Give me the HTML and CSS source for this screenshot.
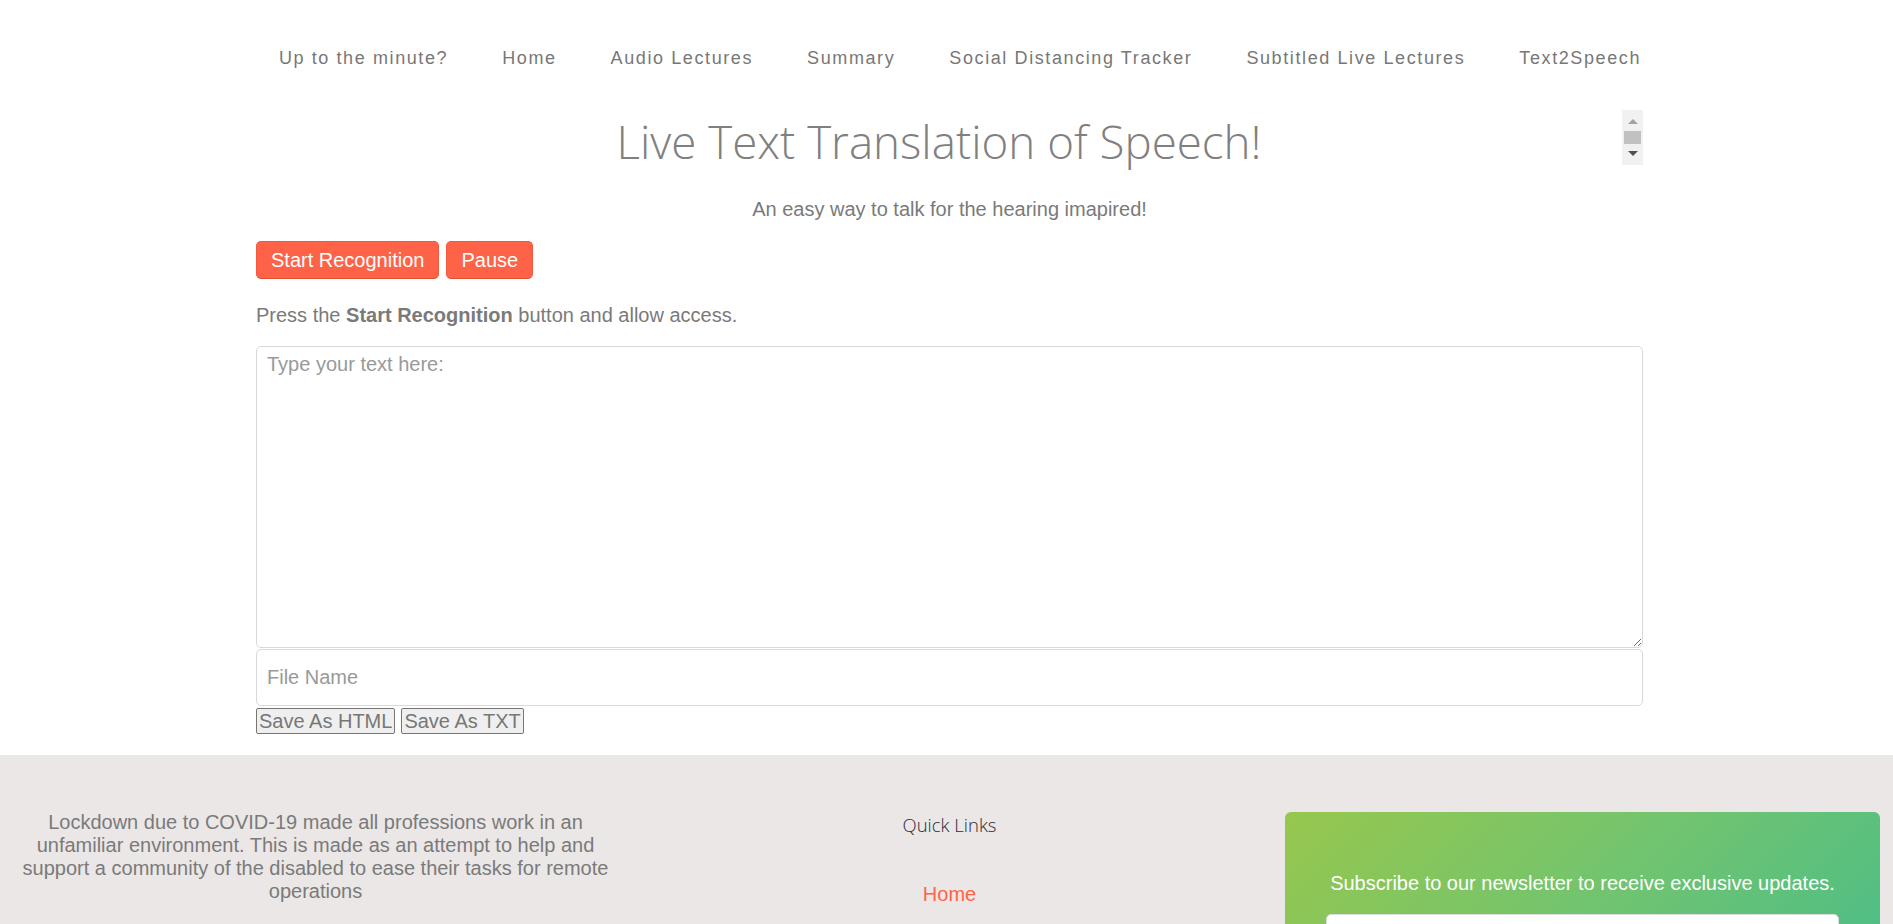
FILE: index.html
```html
<!DOCTYPE html>
<html lang="en">
<head>
<meta charset="utf-8">
<title>Live Text Translation of Speech</title>
<link rel="stylesheet" href="styles.css">
</head>
<body>
<header class="topnav">
  <nav class="nav-links">
    <a href="#">Up to the minute?</a>
    <a href="#">Home</a>
    <a href="#">Audio Lectures</a>
    <a href="#">Summary</a>
    <a href="#">Social Distancing Tracker</a>
    <a href="#">Subtitled Live Lectures</a>
    <a href="#">Text2Speech</a>
  </nav>
</header>
<main class="content">
  <div class="title-box">
    <h1 class="title">Live Text Translation of Speech!</h1>
    <div class="fake-scroll">
      <span class="arrow-up"></span>
      <span class="thumb"></span>
      <span class="arrow-down"></span>
    </div>
  </div>
  <p class="lead">An easy way to talk for the hearing imapired!</p>
  <div class="actions">
    <button class="btn-primary">Start Recognition</button>
    <button class="btn-primary">Pause</button>
  </div>
  <p class="hint">Press the <b>Start Recognition</b> button and allow access.</p>
  <textarea class="text-area" placeholder="Type your text here:"></textarea>
  <input class="file-name" type="text" placeholder="File Name">
  <div class="save-row">
    <button class="btn-save">Save As HTML</button>
    <button class="btn-save">Save As TXT</button>
  </div>
</main>
<footer class="footer">
  <div class="footer-col about">
    <p>Lockdown due to COVID-19 made all professions work in an unfamiliar environment. This is made as an attempt to help and support a community of the disabled to ease their tasks for remote operations</p>
  </div>
  <div class="footer-col links">
    <h4 class="links-title">Quick Links</h4>
    <a class="footer-link" href="#">Home</a>
  </div>
  <div class="footer-col subscribe">
    <div class="newsletter">
      <p class="newsletter-text">Subscribe to our newsletter to receive exclusive updates.</p>
      <input class="newsletter-input" type="email">
    </div>
  </div>
</footer>
</body>
</html>
```

FILE: styles.css
```css
html, body {
  margin: 0;
  padding: 0;
}
body {
  font-family: "Liberation Sans", Arial, sans-serif;
  font-size: 20px;
  color: #7a7a7a;
  background: #fff;
}

.topnav {
  width: 1387px;
  margin-left: calc((100% - 1381px) / 2);
  padding-top: 46px;
}
.nav-links {
  display: flex;
  justify-content: flex-end;
  gap: 54px;
  padding-right: 2px;
}
.nav-links a {
  color: #777;
  text-decoration: none;
  font-size: 18px;
  letter-spacing: 1.6px;
  line-height: 24px;
}

.content {
  width: 1387px;
  margin-left: calc((100% - 1381px) / 2);
}
.title-box {
  display: flex;
  margin-top: 40px;
  height: 55px;
}
.title {
  flex: 1;
  margin: 0;
  padding-top: 4px;
  text-align: center;
  font-family: "Open Sans", sans-serif;
  font-weight: 300;
  font-size: 45.7px;
  line-height: 55px;
  color: #808080;
}
.fake-scroll {
  width: 21px;
  background: #f1f1f1;
  display: flex;
  flex-direction: column;
  align-items: center;
}
.arrow-up {
  margin-top: 9px;
  width: 0;
  height: 0;
  border-left: 5px solid transparent;
  border-right: 5px solid transparent;
  border-bottom: 5px solid #a3a3a3;
}
.thumb {
  margin-top: 7px;
  width: 17px;
  height: 13px;
  background: #c1c1c1;
}
.arrow-down {
  margin-top: 7px;
  width: 0;
  height: 0;
  border-left: 5px solid transparent;
  border-right: 5px solid transparent;
  border-top: 5px solid #505050;
}

.lead {
  margin: 32px 0 0;
  text-align: center;
  line-height: 24px;
}
.actions {
  margin-top: 20px;
  display: flex;
  gap: 7px;
}
.btn-primary {
  font-family: "Liberation Sans", Arial, sans-serif;
  font-size: 20px;
  line-height: 24px;
  color: #fff;
  background: #ff6347;
  border: 1px solid #f05a3e;
  border-bottom-color: #e0502f;
  border-radius: 5px;
  padding: 6px 14px;
}
.hint {
  margin: 24px 0 0;
  line-height: 24px;
}
.text-area {
  display: block;
  box-sizing: border-box;
  width: 100%;
  height: 302px;
  margin-top: 19px;
  padding: 6px 10px;
  border: 1px solid #d9d9d9;
  border-radius: 5px;
  font-family: "Liberation Sans", Arial, sans-serif;
  font-size: 20px;
  color: #555;
}
.text-area::placeholder,
.file-name::placeholder {
  color: #999;
}
.file-name {
  display: block;
  box-sizing: border-box;
  width: 100%;
  height: 57px;
  margin-top: 1px;
  padding: 6px 10px;
  border: 1px solid #d9d9d9;
  border-radius: 5px;
  font-family: "Liberation Sans", Arial, sans-serif;
  font-size: 20px;
}
.save-row {
  margin-top: 2px;
  display: flex;
  gap: 6px;
}
.btn-save {
  font-family: "Liberation Sans", Arial, sans-serif;
  font-size: 20px;
  line-height: 22px;
  color: #777;
  background: #efefef;
  border: 1px solid #767676;
  border-radius: 2px;
  padding: 1px 2px;
}

.footer {
  margin-top: 21px;
  background: #ebe7e6;
  display: grid;
  grid-template-columns: 1fr 1fr 1fr;
  min-height: 200px;
}
.footer-col {
  padding-top: 56px;
}
.about {
  padding-left: 15px;
  padding-right: 15px;
  text-align: center;
}
.about p {
  margin: 0;
  line-height: 23px;
}
.links {
  text-align: center;
  display: flex;
  flex-direction: column;
  align-items: center;
}
.links-title {
  margin: 2px 0 0 6px;
  font-family: "Open Sans", sans-serif;
  font-weight: 300;
  font-size: 18.5px;
  line-height: 24px;
  color: #2a2a3a;
}
.footer-link {
  margin-top: 45px;
  margin-left: 6px;
  color: #ff6347;
  text-decoration: none;
  line-height: 24px;
}
.subscribe {
  padding-left: 23px;
  padding-right: 13px;
}
.newsletter {
  margin-top: 1px;
  background: linear-gradient(135deg, #97c74d 0%, #72c46f 50%, #47bd8a 100%);
  border-radius: 6px;
  padding: 59px 41px 0;
  height: 200px;
  box-sizing: border-box;
}
.newsletter-text {
  margin: 0;
  color: #fff;
  text-align: center;
  line-height: 24px;
}
.newsletter-input {
  display: block;
  box-sizing: border-box;
  width: 100%;
  height: 40px;
  margin-top: 19px;
  border: 1px solid #ddd;
  border-radius: 5px;
  background: #fff;
}
```
